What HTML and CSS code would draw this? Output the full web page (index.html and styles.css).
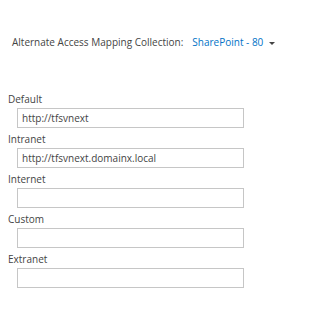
FILE: index.html
```html
<!DOCTYPE html>
<html lang="en">
<head>
  <meta charset="UTF-8">
  <title>Alternate Access Mappings</title>
  <link rel="stylesheet" href="styles.css">
</head>
<body>
  <div class="collection">
    <span class="collection-label">Alternate Access Mapping Collection:</span>
    <span class="collection-value">SharePoint - 80</span>
    <span class="arrow"></span>
  </div>

  <div class="fields">
    <div class="field">
      <label>Default</label>
      <div class="box">http://tfsvnext</div>
    </div>
    <div class="field">
      <label>Intranet</label>
      <div class="box">http://tfsvnext.domainx.local</div>
    </div>
    <div class="field">
      <label>Internet</label>
      <div class="box"></div>
    </div>
    <div class="field">
      <label>Custom</label>
      <div class="box"></div>
    </div>
    <div class="field">
      <label>Extranet</label>
      <div class="box"></div>
    </div>
  </div>
</body>
</html>
```

FILE: styles.css
```css
body {
  margin: 0;
  background: #fff;
  color: #444;
  font-family: "Open Sans", "Noto Sans", sans-serif;
  font-size: 10px;
}
.collection {
  display: flex;
  align-items: center;
  height: 16px;
  padding: 34px 0 0 12px;
}
.collection-value {
  color: #0072c6;
  margin-left: 9px;
}
.arrow {
  width: 0;
  height: 0;
  margin-left: 6px;
  margin-top: 2px;
  border-left: 3px solid transparent;
  border-right: 3px solid transparent;
  border-top: 3px solid #444;
}
.fields {
  padding: 41px 0 0 8px;
}
.field {
  margin-bottom: 3px;
}
.field label {
  display: block;
  line-height: 16px;
  margin-bottom: 1px;
}
.box {
  box-sizing: border-box;
  width: 227px;
  height: 20px;
  margin-left: 9px;
  padding: 0 4px;
  border: 1px solid #c6c6c6;
  line-height: 18px;
  color: #444;
}
```
